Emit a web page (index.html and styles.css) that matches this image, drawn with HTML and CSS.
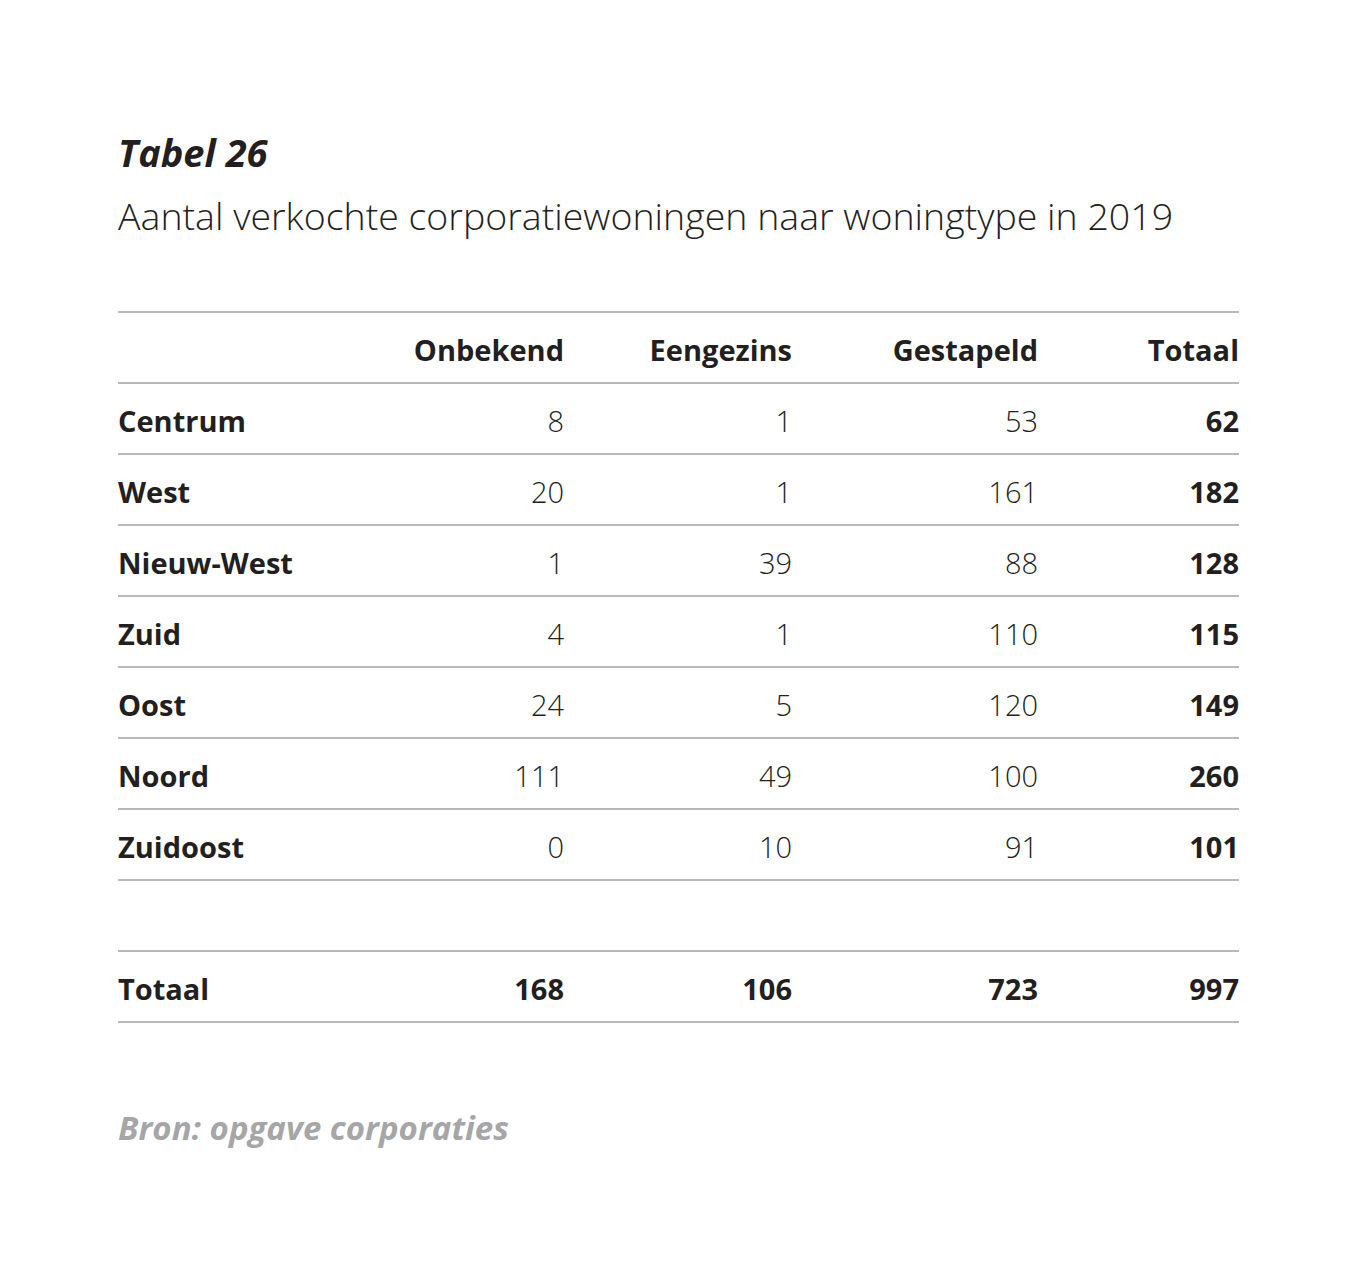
FILE: index.html
```html
<!DOCTYPE html>
<html lang="nl">
<head>
<meta charset="utf-8">
<title>Tabel 26</title>
<link rel="stylesheet" href="styles.css">
</head>
<body>
<div class="page">
  <h1 class="title">Tabel 26</h1>
  <p class="subtitle">Aantal verkochte corporatiewoningen naar woningtype in 2019</p>
  <table class="data">
    <colgroup>
      <col class="c-label"><col class="c-a"><col class="c-b"><col class="c-c"><col class="c-d">
    </colgroup>
    <thead>
      <tr><th></th><th class="num">Onbekend</th><th class="num">Eengezins</th><th class="num">Gestapeld</th><th class="num">Totaal</th></tr>
    </thead>
    <tbody>
      <tr><th>Centrum</th><td>8</td><td>1</td><td>53</td><td class="tot">62</td></tr>
      <tr><th>West</th><td>20</td><td>1</td><td>161</td><td class="tot">182</td></tr>
      <tr><th>Nieuw-West</th><td>1</td><td>39</td><td>88</td><td class="tot">128</td></tr>
      <tr><th>Zuid</th><td>4</td><td>1</td><td>110</td><td class="tot">115</td></tr>
      <tr><th>Oost</th><td>24</td><td>5</td><td>120</td><td class="tot">149</td></tr>
      <tr><th>Noord</th><td>111</td><td>49</td><td>100</td><td class="tot">260</td></tr>
      <tr><th>Zuidoost</th><td>0</td><td>10</td><td>91</td><td class="tot">101</td></tr>
      <tr class="spacer"><th></th><td></td><td></td><td></td><td></td></tr>
      <tr class="total"><th>Totaal</th><td>168</td><td>106</td><td>723</td><td>997</td></tr>
    </tbody>
  </table>
  <p class="source">Bron: opgave corporaties</p>
</div>
</body>
</html>
```
FILE: styles.css
```css
html, body {
  margin: 0;
  padding: 0;
  background: #ffffff;
}
body {
  font-family: "Open Sans", "Noto Sans", "Liberation Sans", sans-serif;
  color: #231f20;
}
.page {
  padding: 128px 0 0 118px;
  width: 1121px;
}
.title {
  margin: 0;
  font-size: 38px;
  font-weight: 700;
  font-style: italic;
  line-height: 48px;
  letter-spacing: 0;
}
.subtitle {
  margin: 16px 0 0 0;
  font-size: 37.5px;
  font-weight: 300;
  line-height: 48px;
  letter-spacing: 0;
}
.data {
  margin-top: 71px;
  width: 1121px;
  border-collapse: collapse;
  table-layout: fixed;
  border-top: 2px solid #b9b9b9;
}
.c-label { width: 250px; }
.c-a { width: 196px; }
.c-b { width: 228px; }
.c-c { width: 246px; }
.c-d { width: 201px; }
.data tr {
  height: 71px;
  border-bottom: 2px solid #b9b9b9;
}
.data th, .data td {
  padding: 4px 0 0 0;
  font-size: 29px;
  line-height: 65px;
  vertical-align: middle;
  white-space: nowrap;
}
.data th {
  text-align: left;
  font-weight: 700;
}
.data th.num {
  text-align: right;
}
.data td {
  text-align: right;
  font-weight: 300;
}
.data td.tot, .data .total td {
  font-weight: 700;
}
.source {
  margin: 82px 0 0 0;
  font-size: 33px;
  font-weight: 700;
  font-style: italic;
  color: #a6a6a6;
  letter-spacing: 0;
}
```
